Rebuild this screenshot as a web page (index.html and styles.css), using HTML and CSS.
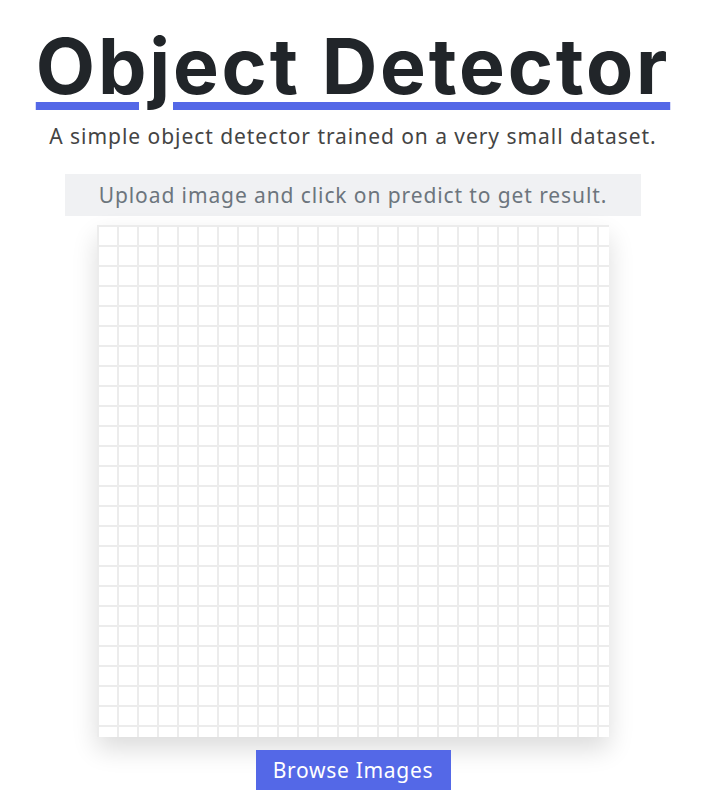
FILE: index.html
```html
<!DOCTYPE html>
<html>
<head>
<meta charset="utf-8">
<link rel="stylesheet" href="styles.css">
</head>
<body>
<main class="app">
  <h1 class="title">Object Detector</h1>
  <p class="subtitle">A simple object detector trained on a very small dataset.</p>
  <div class="banner">Upload image and click on predict to get result.</div>
  <div class="canvas"></div>
  <button class="browse">Browse Images</button>
</main>
</body>
</html>
```
FILE: styles.css
```css
html, body {
  margin: 0;
  padding: 0;
  background: #ffffff;
}
.app {
  display: flex;
  flex-direction: column;
  align-items: center;
  padding-top: 18px;
}
.title {
  margin: 0;
  font-family: Inter, "Noto Sans", sans-serif;
  font-weight: 700;
  font-size: 77px;
  line-height: 96px;
  color: #212529;
  letter-spacing: 2.8px;
  text-decoration: underline;
  text-decoration-color: #5468e7;
  text-decoration-thickness: 8px;
  text-underline-offset: 8px;
  text-decoration-skip-ink: auto;
}
.subtitle {
  margin: 10px 0 0 0;
  font-family: "Noto Sans", sans-serif;
  font-size: 21px;
  line-height: 24px;
  letter-spacing: 0.95px;
  color: #444444;
}
.banner {
  margin-top: 26px;
  width: 576px;
  height: 42px;
  background: #f0f1f3;
  color: #6c757d;
  font-family: "Noto Sans", sans-serif;
  font-size: 21px;
  letter-spacing: 0.9px;
  display: flex;
  align-items: center;
  justify-content: center;
}
.canvas {
  margin-top: 9px;
  width: 512px;
  height: 512px;
  background-color: #ffffff;
  background-image:
    linear-gradient(to right, #ececec 0, #ececec 2px, transparent 2px),
    linear-gradient(to bottom, #ececec 0, #ececec 2px, transparent 2px);
  background-size: 20px 20px;
  box-shadow: 0 12px 24px rgba(0, 0, 0, 0.14);
}
.browse {
  margin-top: 13px;
  width: 195px;
  height: 40px;
  border: none;
  background: #5468e7;
  color: #ffffff;
  font-family: "Noto Sans", sans-serif;
  font-size: 21px;
  letter-spacing: 0.7px;
  padding: 0;
}
```
